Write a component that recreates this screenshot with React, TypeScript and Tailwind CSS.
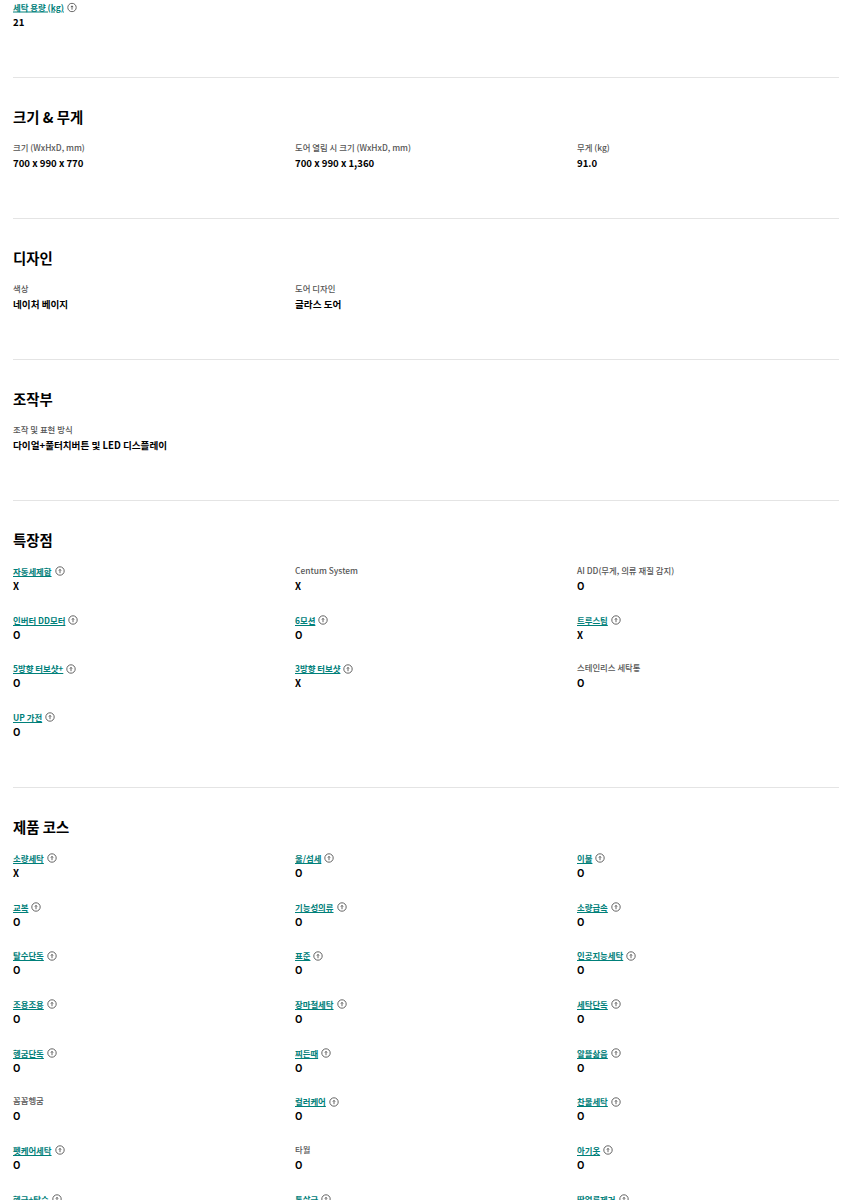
const FONT = "font-['Noto_Sans_CJK_KR','Noto_Sans',sans-serif]";

type Spec = { label: string; value: string; link?: boolean };

const InfoIcon = () => (
  <svg width="10" height="10" viewBox="0 0 10 10" fill="none" stroke="#555" strokeWidth="0.9" className="ml-[3px] shrink-0">
    <circle cx="5" cy="5" r="4.2" />
    <path d="M5 7.2V3.6M3.9 4.6 5 3.3l1.1 1.3" />
  </svg>
);

const SpecItem = ({ label, value, link }: Spec) => (
  <div className="h-[48.67px]">
    <div className="flex h-[15px] items-center text-[8.4px] leading-[15px]">
      {link ? (
        <>
          <span className="relative top-px font-semibold text-[#00807a] underline">{label}</span>
          <span className="relative top-px">
            <InfoIcon />
          </span>
        </>
      ) : (
        <span className="font-medium text-[#555]">{label}</span>
      )}
    </div>
    <div className="text-[9.6px] font-bold leading-[16px] text-black">{value}</div>
  </div>
);

const Section = ({ title, items }: { title: string; items: Spec[] }) => (
  <section className="border-t border-[#e4e4e4] pt-[28px] pb-[29.33px]">
    <h2 className="mb-[12px] text-[14.4px] font-bold leading-[22px] text-black">{title}</h2>
    <div className="grid grid-cols-3 gap-x-5">
      {items.map((item) => (
        <SpecItem key={item.label} {...item} />
      ))}
    </div>
  </section>
);

const features: Spec[] = [
  { label: "자동세제함", value: "X", link: true },
  { label: "Centum System", value: "X" },
  { label: "AI DD(무게, 의류 재질 감지)", value: "O" },
  { label: "인버터 DD모터", value: "O", link: true },
  { label: "6모션", value: "O", link: true },
  { label: "트루스팀", value: "X", link: true },
  { label: "5방향 터보샷+", value: "O", link: true },
  { label: "3방향 터보샷", value: "X", link: true },
  { label: "스테인리스 세탁통", value: "O" },
  { label: "UP 가전", value: "O", link: true },
];

const courses: Spec[] = [
  { label: "소량세탁", value: "X", link: true },
  { label: "울/섬세", value: "O", link: true },
  { label: "이불", value: "O", link: true },
  { label: "교복", value: "O", link: true },
  { label: "기능성의류", value: "O", link: true },
  { label: "소량급속", value: "O", link: true },
  { label: "탈수단독", value: "O", link: true },
  { label: "표준", value: "O", link: true },
  { label: "인공지능세탁", value: "O", link: true },
  { label: "조용조용", value: "O", link: true },
  { label: "장마철세탁", value: "O", link: true },
  { label: "세탁단독", value: "O", link: true },
  { label: "헹굼단독", value: "O", link: true },
  { label: "찌든때", value: "O", link: true },
  { label: "알뜰삶음", value: "O", link: true },
  { label: "꼼꼼헹굼", value: "O" },
  { label: "컬러케어", value: "O", link: true },
  { label: "찬물세탁", value: "O", link: true },
  { label: "펫케어세탁", value: "O", link: true },
  { label: "타월", value: "O" },
  { label: "아기옷", value: "O", link: true },
  { label: "헹굼+탈수", value: "O", link: true },
  { label: "통살균", value: "O", link: true },
  { label: "땀얼룩제거", value: "O", link: true },
];

export default function App() {
  return (
    <div className={`${FONT} h-[1200px] overflow-hidden bg-white pl-[13px] pr-[21px]`}>
      <div className="h-[77px] -translate-y-[1.5px]">
        <SpecItem label="세탁 용량 (kg)" value="21" link />
      </div>
      <Section
        title="크기 & 무게"
        items={[
          { label: "크기 (WxHxD, mm)", value: "700 x 990 x 770" },
          { label: "도어 열림 시 크기 (WxHxD, mm)", value: "700 x 990 x 1,360" },
          { label: "무게 (kg)", value: "91.0" },
        ]}
      />
      <Section
        title="디자인"
        items={[
          { label: "색상", value: "네이처 베이지" },
          { label: "도어 디자인", value: "글라스 도어" },
        ]}
      />
      <Section title="조작부" items={[{ label: "조작 및 표현 방식", value: "다이얼+풀터치버튼 및 LED 디스플레이" }]} />
      <Section title="특장점" items={features} />
      <Section title="제품 코스" items={courses} />
    </div>
  );
}
